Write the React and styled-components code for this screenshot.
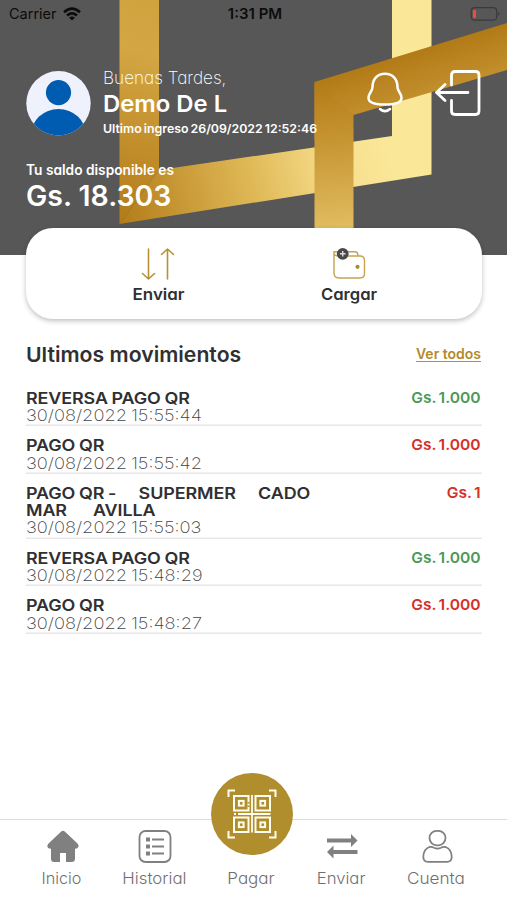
import React from "react";
import styled, { createGlobalStyle } from "styled-components";

const GlobalStyle = createGlobalStyle`
  * { box-sizing: border-box; }
  body { margin: 0; background: #fff; }
`;

const Screen = styled.div`
  width: 507px;
  height: 900px;
  display: flex;
  flex-direction: column;
  position: relative;
  overflow: hidden;
  background: #fff;
  color: #303032;
  font-family: Inter, "Open Sans", sans-serif;
  font-feature-settings: "cv11";
`;

const Text = styled.span`
  display: block;
  white-space: pre;
  font-size: ${(p) => p.$size}px;
  font-weight: ${(p) => p.$weight || 400};
  line-height: ${(p) => p.$line}px;
  letter-spacing: ${(p) => p.$track || 0}px;
  word-spacing: ${(p) => p.$wordGap || 0}px;
  color: ${(p) => p.$color || "inherit"};
  transform: scaleX(${(p) => p.$stretch || 1});
  transform-origin: ${(p) => p.$origin || "left"};
`;

const Header = styled.header`
  position: relative;
  flex: 0 0 255px;
  background: #575757;
  color: #fff;
`;

const Artwork = styled.svg`
  position: absolute;
  inset: 0;
`;

const HeaderContent = styled.div`
  position: relative;
  display: flex;
  flex-direction: column;
`;

const StatusBar = styled.div`
  display: grid;
  grid-template-columns: 1fr auto 1fr;
  align-items: center;
  height: 28px;
  padding: 0 6px 0 9px;
  color: #0c0c0c;
  font-feature-settings: normal;
`;

const Carrier = styled.div`
  display: flex;
  align-items: center;
  gap: 6px;
`;

const BatteryIcon = styled.svg`
  justify-self: end;
`;

const Profile = styled.div`
  display: flex;
  height: 112px;
  padding: 40px 26px 0 26px;
`;

const Avatar = styled.svg`
  flex: none;
  margin-top: 3px;
`;

const Greeting = styled.div`
  width: 230px;
  margin-left: 12px;
`;

const HeaderActions = styled.div`
  display: flex;
  margin: 1px 0 0 auto;
  gap: 32px;
`;

const Balance = styled.div`
  padding: 20px 26px 0;
`;

const ActionCard = styled.section`
  position: relative;
  display: flex;
  flex: 0 0 91px;
  margin: -27px 25px 0 26px;
  padding: 0 38px 0 37px;
  background: #fff;
  border-radius: 27px;
  box-shadow: 0 2px 5px rgba(0, 0, 0, 0.25);
`;

const CardAction = styled.div`
  flex: 1;
  display: flex;
  flex-direction: column;
  align-items: center;
  padding-top: 19px;
`;

const Movements = styled.main`
  flex: 1;
  padding: 23px 25px 0 26px;
`;

const SectionHeader = styled.div`
  display: flex;
  justify-content: space-between;
  height: 36.700px;
`;

const SeeAll = styled(Text)`
  border-bottom: 1px solid #bb9135;
  height: 18px;
  margin: 2px 1px 0 0;
`;

const MovementRow = styled.div`
  display: flex;
  justify-content: space-between;
  height: ${(p) => (p.$tall ? 64.8 : 47.65)}px;
  padding: 11px 1px 0 0;
  box-shadow: inset 0 -1.500px 0 #e8e8e8;
`;

const NavBar = styled.nav`
  display: grid;
  grid-template-columns: 122px 65px 129px 50px 140px;
  flex: 0 0 81px;
  border-top: 1.5px solid #dedede;
  color: #6f6f6f;
`;

const NavItem = styled.div`
  display: flex;
  flex-direction: column;
  align-items: center;
  justify-self: center;
  gap: 3px;
  padding-top: 9px;
`;

const PayItem = styled(NavItem)`
  gap: 12px;
  padding-top: 0;
  margin-top: -47px;
`;

const PayButton = styled.div`
  display: flex;
  align-items: center;
  justify-content: center;
  width: 82px;
  height: 82px;
  border-radius: 50%;
  background: #b18e2d;
`;

function GoldBands() {
  return (
    <Artwork width="507" height="255" viewBox="0 0 507 255">
      <defs>
        <linearGradient id="left" gradientUnits="userSpaceOnUse" x1="119" y1="222" x2="175" y2="0">
          <stop offset="0" stopColor="#b27c19" />
          <stop offset=".3" stopColor="#c08b29" />
          <stop offset=".75" stopColor="#d3a744" />
          <stop offset="1" stopColor="#cfa23e" />
        </linearGradient>
        <linearGradient id="lower" gradientUnits="userSpaceOnUse" x1="119" y1="222" x2="392" y2="160">
          <stop offset="0" stopColor="#b27c19" />
          <stop offset=".5" stopColor="#e0b957" />
          <stop offset=".8" stopColor="#f7df8e" />
          <stop offset="1" stopColor="#fae798" />
        </linearGradient>
        <linearGradient id="front" gradientUnits="userSpaceOnUse" x1="390" y1="58" x2="403" y2="101">
          <stop offset="0" stopColor="#b17a17" />
          <stop offset="1" stopColor="#c28f2c" />
        </linearGradient>
        <linearGradient id="stem" gradientUnits="userSpaceOnUse" x1="330" y1="78" x2="345" y2="250">
          <stop offset="0" stopColor="#b17a17" />
          <stop offset=".25" stopColor="#c08c29" />
          <stop offset="1" stopColor="#e8c66a" />
        </linearGradient>
      </defs>
      <path d="M392 0H431.5V174.5L119.500 224L159 170L392 136Z" fill="url(#lower)" />
      <path d="M119.500 0H159V170L119.500 224Z" fill="url(#left)" />
      <path d="M314.500 82L507 23V70L353.500 115L314.500 140Z" fill="url(#front)" />
      <path d="M314.500 82L353.500 115V255H314.500Z" fill="url(#stem)" />
    </Artwork>
  );
}

const WifiIcon = () => (
  <svg width="18" height="14" viewBox="0 0 18 14" fill="none" stroke="#0c0c0c" strokeWidth="2.6">
    <path d="M1 5.200Q9-2 17 5.200M4 8.500Q9 4.300 14 8.500" />
    <path d="M9 13.600L6 10.500Q9 8.300 12 10.500Z" fill="#0c0c0c" stroke="none" />
  </svg>
);

const Battery = () => (
  <BatteryIcon width="31" height="14" viewBox="0 0 31 14">
    <rect x="1.200" y=".7" width="25.500" height="12.500" rx="3.500" fill="none" stroke="#3a3a3a" strokeWidth="1.200" />
    <rect x="3" y="2.700" width="3" height="8.500" rx="1.200" fill="#f4493e" />
    <path d="M28.300 4.800Q31 7 28.300 9.200Z" fill="#3a3a3a" />
  </BatteryIcon>
);

const UserAvatar = () => (
  <Avatar width="65" height="65" viewBox="0 0 65 65">
    <defs>
      <clipPath id="face"><circle cx="32.500" cy="32.200" r="32.200" /></clipPath>
    </defs>
    <g clipPath="url(#face)">
      <rect width="65" height="65" fill="#eff1fc" />
      <circle cx="32.500" cy="21.600" r="12.600" fill="#005cb1" />
      <ellipse cx="32.500" cy="64" rx="27.500" ry="26" fill="#005cb1" />
    </g>
  </Avatar>
);

const BellIcon = () => (
  <svg width="36" height="46" viewBox="0 0 36 46" fill="none" stroke="#fff" strokeWidth="2.500" strokeLinecap="round">
    <path d="M18 4.800C10.500 4.800 5.600 10 5.500 18C5.400 23 1.500 23.500 1.500 29C1.500 34 9 35.500 18 35.500C27 35.500 34.500 34 34.500 29C34.500 23.500 30.600 23 30.500 18C30.400 10 25.500 4.800 18 4.800Z" />
    <path d="M13 40Q18 44.300 23 40" />
  </svg>
);

const ExitIcon = () => (
  <svg width="46" height="48" viewBox="1 0 46 48" fill="none" stroke="#fff" strokeWidth="2.800" strokeLinecap="round" strokeLinejoin="round">
    <path d="M17.500 16V6Q17.500 2.500 21 2.500H41.500Q45 2.500 45 6V42Q45 45.500 41.500 45.500H21Q17.500 45.500 17.500 42V31.500" />
    <path d="M34 23.500H2.500M11 15.500L2.500 23.500L11 31.500" />
  </svg>
);

const TransferIcon = () => (
  <svg width="34" height="34" viewBox="0 0 34 34" fill="none" stroke="#b49235" strokeWidth="1.600" strokeLinecap="round" strokeLinejoin="round">
    <path d="M7.500 2V32M1.500 26.500L7.500 32L13.500 26.500M26.500 32V2M20.500 7.500L26.500 2L32.500 7.500" />
  </svg>
);

const WalletIcon = () => (
  <svg width="34" height="34" viewBox="0 0 34 34" fill="none" stroke="#c5a252" strokeWidth="1.400">
    <path d="M2 4V26Q2 31 7 31H28Q32.500 31 32.500 26.500V13.500Q32.500 9 28 9H7Q2 9 2 6Q2 4.800 3.500 4.800H23Q26 4.800 26 9" />
    <circle cx="25.500" cy="19.800" r="2.100" fill="#b08b28" stroke="none" />
    <circle cx="10.700" cy="6.800" r="5.900" fill="#484848" stroke="none" />
    <path d="M10.700 4V9.600M7.900 6.800H13.500" stroke="#ddd" />
  </svg>
);

const HomeIcon = () => (
  <svg width="34" height="35" viewBox="-2 0 34 35" fill="#808080" overflow="visible">
    <path d="M15 2.700Q17 .8 19 2.700L31 14Q33.500 16.500 32 18.500Q31 20 29 19.500V29.500Q29 33 25.500 33H20V24H14V33H8Q5 33 5 29.500V19.500Q2.800 20 1.800 18.500Q.5 16.500 3 14Z" />
  </svg>
);

const HistoryIcon = () => (
  <svg width="34" height="35" viewBox="-1 0 34 35" fill="none" stroke="#808080" strokeWidth="1.800" overflow="visible">
    <rect x="1.500" y="2" width="31" height="31" rx="6" />
    <path d="M14 10.500H26M14 17.500H26M14 24.500H26" />
    <path d="M8 10.500H12M8 17.500H12M8 24.500H12" strokeWidth="4" />
  </svg>
);

const SwapIcon = () => (
  <svg width="34" height="35" viewBox="-1 0 34 35" fill="#808080">
    <path d="M2 9.500H26V5L32.500 11.500L26 18V13.500H2ZM32.500 21H8.500V16.500L2 23L8.500 29.500V25H32.500Z" />
  </svg>
);

const AccountIcon = () => (
  <svg width="34" height="35" viewBox="-1.500 0 34 35" fill="none" stroke="#808080" strokeWidth="1.800" overflow="visible">
    <rect x="9" y="1.800" width="16" height="14.500" rx="7.200" />
    <path d="M9 18Q3 20 2.800 28Q2.800 32.800 7.500 32.800H26.500Q31.200 32.800 31.200 28Q31 20 25 18Q22.500 17.500 20.500 18.800Q17 20.500 13.500 18.800Q11.500 17.500 9 18Z" />
  </svg>
);

function Finder({ x, y }) {
  return (
    <g transform={`translate(${x} ${y})`}>
      <rect width="14.500" height="14.500" />
      <rect x="4.900" y="4.900" width="4.700" height="4.700" strokeWidth="2" />
    </g>
  );
}

const QrIcon = () => (
  <svg width="52" height="52" viewBox="0 0 52 52" fill="none" stroke="#fffdf0" strokeWidth="2">
    <path d="M9 2.500H2.500V9M43 2.500H49.500V9M49.500 43V49.500H43M9 49.500H2.500V43" />
    <Finder x={8} y={8} />
    <Finder x={29.500} y={8} />
    <Finder x={8} y={29.500} />
    <Finder x={29.500} y={29.500} />
    <path d="M26 7V44.500M12 26H44.500" strokeWidth="1.800" />
    <path d="M8 26H10" />
    <path d="M22.500 14V15.500M22.500 17.500V19" stroke="#b18e2d" />
  </svg>
);

const movements = [
  { title: "REVERSA PAGO QR", date: "30/08/2022 15:55:44", amount: "Gs. 1.000", credit: true },
  { title: "PAGO QR", date: "30/08/2022 15:55:42", amount: "Gs. 1.000" },
  { title: "PAGO QR -      SUPERMER      CADO\nMAR       AVILLA", date: "30/08/2022 15:55:03", amount: "Gs. 1", tall: true },
  { title: "REVERSA PAGO QR", date: "30/08/2022 15:48:29", amount: "Gs. 1.000", credit: true },
  { title: "PAGO QR", date: "30/08/2022 15:48:27", amount: "Gs. 1.000" },
];

function Movement({ title, date, amount, credit, tall }) {
  return (
    <MovementRow $tall={tall}>
      <div>
        <Text $size={16} $weight={600} $line={17.2} $track={-0.1} $wordGap={-0.6} $stretch={1.12}>{title}</Text>
        <Text $size={16} $weight={200} $line={17} $wordGap={-1} $stretch={1.14} $color="#444">{date}</Text>
      </div>
      <Text $size={15} $weight={600} $line={16.5} $wordGap={-1.5} $stretch={1.04} $origin="right" $color={credit ? "#4c9957" : "#d6301f"}>{amount}</Text>
    </MovementRow>
  );
}

function NavEntry({ icon, label, stretch }) {
  return (
    <NavItem>
      {icon}
      <Text $size={16.5} $weight={300} $line={22} $stretch={stretch} $origin="center">{label}</Text>
    </NavItem>
  );
}

export default function App() {
  return (
    <Screen>
      <GlobalStyle />
      <Header>
        <GoldBands />
        <HeaderContent>
          <StatusBar>
            <Carrier>
              <Text $size={14.5} $line={18}>Carrier</Text>
              <WifiIcon />
            </Carrier>
            <Text $size={15} $weight={600} $line={18}>1:31 PM</Text>
            <Battery />
          </StatusBar>
          <Profile>
            <UserAvatar />
            <Greeting>
              <Text $size={17} $weight={200} $line={20} $stretch={1.01}>Buenas Tardes,</Text>
              <Text $size={23.5} $weight={600} $line={31} $stretch={1.015}>Demo De L</Text>
              <Text $size={12} $weight={600} $line={20} $wordGap={-1} $stretch={1.028}>Ultimo ingreso 26/09/2022 12:52:46</Text>
            </Greeting>
            <HeaderActions>
              <BellIcon />
              <ExitIcon />
            </HeaderActions>
          </Profile>
          <Balance>
            <Text $size={14} $weight={600} $line={20} $stretch={0.98}>Tu saldo disponible es</Text>
            <Text $size={28} $weight={600} $line={33} $stretch={1.015}>Gs. 18.303</Text>
          </Balance>
        </HeaderContent>
      </Header>
      <ActionCard>
        <CardAction>
          <TransferIcon />
          <Text $size={16} $weight={600} $line={27} $stretch={1.06} $origin="center">Enviar</Text>
        </CardAction>
        <CardAction>
          <WalletIcon />
          <Text $size={16} $weight={600} $line={27} $stretch={1.04} $origin="center">Cargar</Text>
        </CardAction>
      </ActionCard>
      <Movements>
        <SectionHeader>
          <Text $size={20.5} $weight={600} $line={26} $stretch={1.035}>Ultimos movimientos</Text>
          <SeeAll $size={14} $weight={600} $line={20} $color="#b28a2c">Ver todos</SeeAll>
        </SectionHeader>
        {movements.map((m) => (
          <Movement key={m.date} {...m} />
        ))}
      </Movements>
      <NavBar>
        <NavEntry icon={<HomeIcon />} label="Inicio" stretch={0.98} />
        <NavEntry icon={<HistoryIcon />} label="Historial" stretch={1.02} />
        <PayItem>
          <PayButton><QrIcon /></PayButton>
          <Text $size={16.5} $weight={300} $line={22} $stretch={1.03} $origin="center">Pagar</Text>
        </PayItem>
        <NavEntry icon={<SwapIcon />} label="Enviar" stretch={1.01} />
        <NavEntry icon={<AccountIcon />} label="Cuenta" stretch={1.04} />
      </NavBar>
    </Screen>
  );
}
